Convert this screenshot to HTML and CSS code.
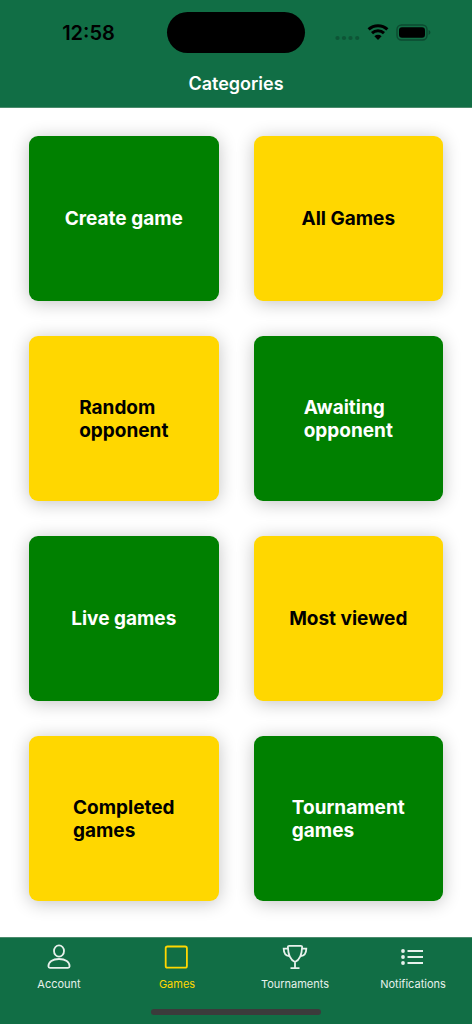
FILE: index.html
```html
<!DOCTYPE html>
<html lang="en">
<head>
<meta charset="utf-8">
<meta name="viewport" content="width=device-width, initial-scale=1">
<title>Categories</title>
<link rel="stylesheet" href="styles.css">
</head>
<body>
<header class="header">
  <div class="status">
    <time class="clock">12:58</time>
    <div class="island"></div>
    <div class="indicators">
      <svg class="signal" viewBox="0 0 25 20" aria-hidden="true"><circle cx="2.5" cy="15" r="2.1"/><circle cx="9" cy="15" r="2.1"/><circle cx="15.5" cy="15" r="2.1"/><circle cx="22.2" cy="15" r="2.1"/></svg>
      <svg class="wifi" viewBox="0 0 22 20" aria-hidden="true"><path d="M1.6 6.400a13.600 13.600 0 0 1 18.800 0M5 10.200a8.800 8.800 0 0 1 12 0"/><path class="dot" d="M7.400 13.300a5.200 5.200 0 0 1 7.200 0L11 17z"/></svg>
      <svg class="battery" viewBox="0 0 35 20" aria-hidden="true"><rect class="shell" x="1" y="2" width="30" height="15" rx="4.500"/><rect x="3" y="4.300" width="26" height="10.400" rx="3"/><path class="cap" d="M32.600 7.100c2.400.9 2.400 3.900 0 4.800z"/></svg>
    </div>
  </div>
  <h1 class="title">Categories</h1>
</header>
<main class="grid">
  <button class="card green"><span>Create game</span></button>
  <button class="card gold"><span>All Games</span></button>
  <button class="card gold"><span>Random<br>opponent</span></button>
  <button class="card green"><span>Awaiting<br>opponent</span></button>
  <button class="card green"><span>Live games</span></button>
  <button class="card gold"><span>Most viewed</span></button>
  <button class="card gold"><span>Completed<br>games</span></button>
  <button class="card green"><span>Tournament<br>games</span></button>
</main>
<footer class="footer">
  <nav class="tabs">
    <a class="tab" href="#account"><svg class="icon" viewBox="0 0 28 28" aria-hidden="true"><ellipse cx="14" cy="8" rx="5" ry="5.700"/><path d="M3.400 23.300C3.400 19 7.500 16 14 16s10.600 3 10.600 7.300c0 1-.5 1.500-1.600 1.500H5c-1.100 0-1.600-.5-1.600-1.500z"/></svg><span>Account</span></a>
    <a class="tab active" href="#games" aria-current="page"><svg class="icon" viewBox="0 0 28 28" aria-hidden="true"><rect x="2.700" y="3.500" width="21.200" height="21.200" rx="1.800"/></svg><span>Games</span></a>
    <a class="tab" href="#tournaments"><svg class="icon" viewBox="0 0 28 28" aria-hidden="true"><path d="M8.300 2.800h11.400q1.500 0 1.400 1.400c-.3 8.300-2.300 12.700-7.100 14.800-4.800-2.100-6.800-6.500-7.100-14.800q-.1-1.400 1.400-1.400zM14 19v6M9.500 25.200h9M7 5.700H2.700c.1 4.300 1.800 7 5.500 7.300M21 5.700h4.300c-.1 4.300-1.800 7-5.500 7.300"/></svg><span>Tournaments</span></a>
    <a class="tab" href="#notifications"><svg class="icon list" viewBox="0 0 28 28" aria-hidden="true"><path d="M8.500 8h15.500M8.500 14h15.500M8.500 20h15.500"/><circle cx="4" cy="8" r="1.900"/><circle cx="4" cy="14" r="1.900"/><circle cx="4" cy="20" r="1.900"/></svg><span>Notifications</span></a>
  </nav>
  <div class="home"></div>
</footer>
</body>
</html>
```
FILE: styles.css
```css
* { box-sizing: border-box; }
body {
  margin: 0;
  min-height: 100vh;
  display: flex;
  flex-direction: column;
  background: #fff;
  font-family: Inter, "Liberation Sans", sans-serif;
}
.header {
  background: #116e45;
  border-bottom: 1px solid #4b8b6c;
  padding-top: 12px;
}
.status {
  display: grid;
  grid-template-columns: 1fr 138px 1fr;
  align-items: center;
}
.clock {
  padding-left: 10px;
  text-align: center;
  font-size: 20px;
  line-height: 24px;
  font-weight: 600;
  color: #000;
}
.island {
  height: 41px;
  border-radius: 24px;
  background: #000;
}
.indicators {
  display: flex;
  justify-content: center;
  gap: 7px;
  padding-right: 12px;
}
.indicators svg { height: 20px; }
.signal { width: 25px; fill: #0d5536; }
.wifi { width: 22px; fill: none; stroke: #000; stroke-width: 3; }
.wifi .dot { fill: #000; stroke: none; }
.battery { width: 35px; }
.battery .shell { fill: none; stroke: #0c4a30; stroke-width: 1.4; }
.battery .cap { fill: #0c4a30; }
.title {
  margin: 0;
  padding: 19px 0 11px;
  text-align: center;
  font-size: 18px;
  line-height: 24px;
  font-weight: 600;
  color: #fff;
}
.grid {
  flex: 1;
  display: grid;
  grid-template-columns: 1fr 1fr;
  grid-auto-rows: minmax(165px, auto);
  align-content: start;
  gap: 35px;
  padding: 28px 29px 36px;
}
.card {
  display: flex;
  align-items: center;
  justify-content: center;
  border: 0;
  border-radius: 9px;
  padding: 16px;
  box-shadow: 0 2px 18px rgba(0, 0, 0, 0.24);
  font: 700 19px/23px Inter, "Liberation Sans", sans-serif;
  text-align: left;
}
.green { background: #008000; color: #fff; }
.gold { background: #ffd700; color: #000; }
.footer {
  background: #116e45;
  border-top: 1px solid #4b8b6c;
  padding: 5px 0 9px;
}
.tabs { display: grid; grid-template-columns: repeat(4, 1fr); }
.tab {
  display: flex;
  flex-direction: column;
  align-items: center;
  gap: 6px;
  color: #e7f1ec;
  font-size: 11px;
  line-height: 14px;
  font-weight: 400;
  text-decoration: none;
}
.tab.active { color: #ffd700; }
.icon {
  width: 28px;
  height: 28px;
  fill: none;
  stroke: currentColor;
  stroke-width: 1.8;
}
.list circle { fill: currentColor; stroke: none; }
.home {
  width: 36%;
  height: 6px;
  margin: 18px auto 0;
  border-radius: 3px;
  background: #3b3b3b;
}
```
